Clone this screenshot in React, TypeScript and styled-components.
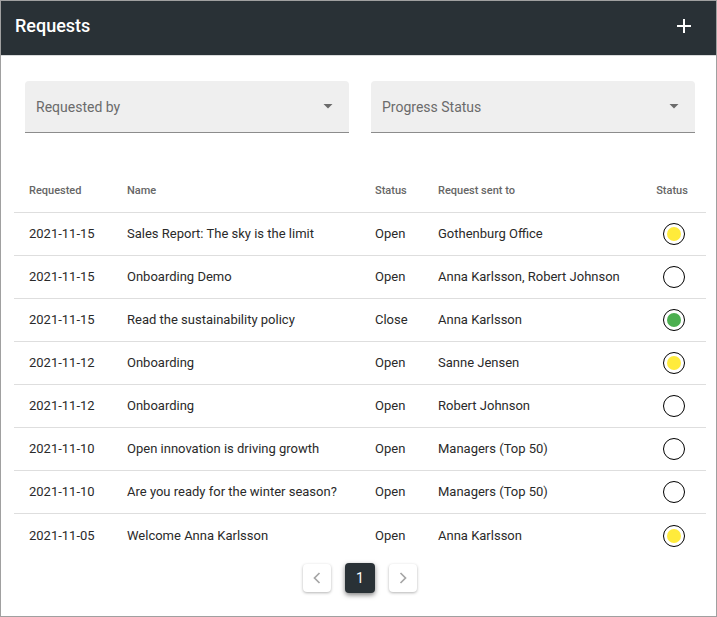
import React from "react";
import styled, { createGlobalStyle, css } from "styled-components";

const GlobalStyle = createGlobalStyle`
  *, *::before, *::after { box-sizing: border-box; }
  body {
    margin: 0;
    background: #fff;
    color: #2a2a2a;
    font-family: Roboto, "Liberation Sans", sans-serif;
    font-size: 13px;
  }
  button, select { font-family: inherit; }
`;

const Panel = styled.main`
  display: flex;
  flex-direction: column;
  min-height: 100vh;
  border: 1px solid #a0a0a0;
`;

const Header = styled.header`
  display: flex;
  align-items: center;
  justify-content: space-between;
  height: 55px;
  padding: 0 20px 4px 14px;
  background: #293136;
  border-bottom: 1px solid #d8dadb;
  color: #fff;
`;

const Title = styled.h1`
  margin: 0;
  font-size: 18px;
  line-height: 24px;
  font-weight: 500;
`;

const AddButton = styled.button`
  display: grid;
  place-items: center;
  width: 24px;
  height: 24px;
  padding: 0;
  border: 0;
  background: transparent;
  color: #fff;
  cursor: pointer;
`;

const Filters = styled.section`
  display: grid;
  grid-template-columns: 1fr 1fr;
  gap: 22px;
  padding: 25px 21px 0 24px;
`;

const Field = styled.label`
  display: grid;
  align-items: center;
  height: 52px;
  border-bottom: 1px solid #8c8c8c;
  border-radius: 4px 4px 0 0;
  background: #efefef;
  color: #6b6b6b;

  > * { grid-area: 1 / 1; }
  > svg {
    justify-self: end;
    margin-right: 16px;
    pointer-events: none;
  }
`;

const Select = styled.select`
  appearance: none;
  width: 100%;
  height: 100%;
  padding: 0 40px 0 11px;
  border: 0;
  background: transparent;
  color: inherit;
  font-size: 14px;
  cursor: pointer;
`;

const Table = styled.table`
  width: auto;
  margin: 35px 10px 0 13px;
  border-collapse: separate;
  border-spacing: 0;
  table-layout: fixed;
  align-self: stretch;
`;

const Column = styled.col<{ $width?: number }>`
  ${({ $width }) => $width && css`width: ${$width}px;`}
`;

const HeadCell = styled.th<{ $center?: boolean }>`
  height: 45px;
  padding: 0 0 0 15px;
  border-bottom: 1px solid #dedede;
  color: #666;
  font-size: 11px;
  font-weight: 500;
  text-align: left;
  white-space: nowrap;
  ${({ $center }) => $center && css`padding: 0 4px 0 0; text-align: center;`}
`;

const Cell = styled.td<{ $center?: boolean }>`
  height: 43px;
  padding: 0 0 0 15px;
  border-bottom: 1px solid #dedede;
  line-height: 16px;
  ${({ $center }) => $center && css`padding: 0;`}

  tr:last-child > & { border-bottom: 0; }
`;

const Ring = styled.span<{ $color?: string }>`
  display: grid;
  place-items: center;
  width: 22px;
  height: 22px;
  margin: 0 auto;
  border: 1px solid #000;
  border-radius: 50%;

  &::before {
    content: "";
    width: 14px;
    height: 14px;
    border-radius: 50%;
    background: ${({ $color }) => $color ?? "transparent"};
  }
`;

const Pagination = styled.nav`
  display: flex;
  justify-content: center;
  align-items: center;
  gap: 14px;
  padding: 6px 0 20px 3px;
`;

const PageButton = styled.button<{ $current?: boolean }>`
  display: grid;
  place-items: center;
  width: 28px;
  height: 28px;
  padding: 0;
  border: 0;
  border-radius: 4px;
  background: #fff;
  color: #a6a6a6;
  font-size: 14px;
  box-shadow: 0 1px 3px rgba(0, 0, 0, 0.3);
  ${({ $current }) =>
    $current &&
    css`
      width: 30px;
      height: 30px;
      background: #293136;
      color: #fff;
      box-shadow: 0 2px 5px rgba(0, 0, 0, 0.5);
    `}
`;

const YELLOW = "#ffeb3b";
const GREEN = "#4caf50";

type Request = { date: string; name: string; status: string; sentTo: string; color?: string };

const requests: Request[] = [
  { date: "2021-11-15", name: "Sales Report: The sky is the limit", status: "Open", sentTo: "Gothenburg Office", color: YELLOW },
  { date: "2021-11-15", name: "Onboarding Demo", status: "Open", sentTo: "Anna Karlsson, Robert Johnson" },
  { date: "2021-11-15", name: "Read the sustainability policy", status: "Close", sentTo: "Anna Karlsson", color: GREEN },
  { date: "2021-11-12", name: "Onboarding", status: "Open", sentTo: "Sanne Jensen", color: YELLOW },
  { date: "2021-11-12", name: "Onboarding", status: "Open", sentTo: "Robert Johnson" },
  { date: "2021-11-10", name: "Open innovation is driving growth", status: "Open", sentTo: "Managers (Top 50)" },
  { date: "2021-11-10", name: "Are you ready for the winter season?", status: "Open", sentTo: "Managers (Top 50)" },
  { date: "2021-11-05", name: "Welcome Anna Karlsson", status: "Open", sentTo: "Anna Karlsson", color: YELLOW },
];

function Filter({ label }: { label: string }) {
  return (
    <Field>
      <Select aria-label={label} defaultValue="">
        <option value="">{label}</option>
      </Select>
      <svg width="10" height="5" viewBox="0 0 10 5" aria-hidden="true">
        <path d="M0.5 0h9L5 4.5z" fill="currentColor" />
      </svg>
    </Field>
  );
}

function Chevron({ d }: { d: string }) {
  return (
    <svg width="8" height="12" viewBox="0 0 8 12" fill="none" stroke="currentColor" strokeWidth="1.7" aria-hidden="true">
      <path d={d} />
    </svg>
  );
}

export default function App() {
  return (
    <>
      <GlobalStyle />
      <Panel>
        <Header>
          <Title>Requests</Title>
          <AddButton type="button" aria-label="Add request">
            <svg width="14" height="14" viewBox="0 0 14 14" aria-hidden="true">
              <path d="M6 0h2v6h6v2H8v6H6V8H0V6h6z" fill="currentColor" />
            </svg>
          </AddButton>
        </Header>
        <Filters>
          <Filter label="Requested by" />
          <Filter label="Progress Status" />
        </Filters>
        <Table>
          <colgroup>
            <Column $width={98} />
            <Column $width={248} />
            <Column $width={63} />
            <Column $width={219} />
            <Column $width={64} />
          </colgroup>
          <thead>
            <tr>
              <HeadCell scope="col">Requested</HeadCell>
              <HeadCell scope="col">Name</HeadCell>
              <HeadCell scope="col">Status</HeadCell>
              <HeadCell scope="col">Request sent to</HeadCell>
              <HeadCell scope="col" $center>Status</HeadCell>
            </tr>
          </thead>
          <tbody>
            {requests.map((r, i) => (
              <tr key={i}>
                <Cell>{r.date}</Cell>
                <Cell>{r.name}</Cell>
                <Cell>{r.status}</Cell>
                <Cell>{r.sentTo}</Cell>
                <Cell $center>
                  <Ring $color={r.color} />
                </Cell>
              </tr>
            ))}
          </tbody>
        </Table>
        <Pagination aria-label="Pages">
          <PageButton type="button" aria-label="Previous page">
            <Chevron d="M6.5 1L1.5 6l5 5" />
          </PageButton>
          <PageButton type="button" $current aria-current="page">1</PageButton>
          <PageButton type="button" aria-label="Next page">
            <Chevron d="M1.5 1l5 5-5 5" />
          </PageButton>
        </Pagination>
      </Panel>
    </>
  );
}
